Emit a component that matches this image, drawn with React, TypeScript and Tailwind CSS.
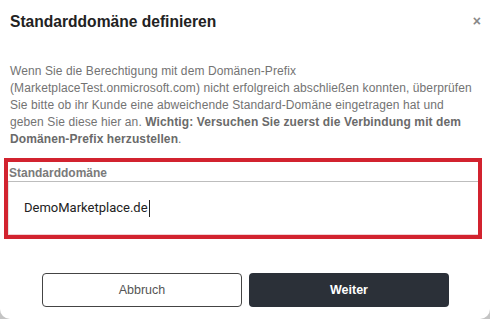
import React from 'react';

const App: React.FC = () => {
  return (
    <div className="w-[490px] h-[319px] bg-[#c4c4c4] overflow-hidden" style={{ fontFamily: '"Liberation Sans", Arial, sans-serif' }}>
      <div className="h-full bg-white rounded-b-[10px] flex flex-col">
        {/* Header */}
        <div className="flex items-start justify-between pl-[10px] pr-[9px] pt-[10px]">
          <h1 className="text-[15.6px] font-bold text-[#222] leading-[24px]">Standarddomäne definieren</h1>
          <span className="text-[#888] text-[14px] font-bold leading-[14px] mt-[4px]">×</span>
        </div>

        {/* Body */}
        <p className="mt-[29px] px-[10px] text-[12px] leading-[17px] text-[#737373] tracking-[0.1px]">
          Wenn Sie die Berechtigung mit dem Domänen-Prefix
          <br />
          (MarketplaceTest.onmicrosoft.com) nicht erfolgreich abschließen konnten, überprüfen
          <br />
          Sie bitte ob ihr Kunde eine abweichende Standard-Domäne eingetragen hat und
          <br />
          geben Sie diese hier an. <b className="text-[#6a6a6a]">Wichtig: Versuchen Sie zuerst die Verbindung mit dem</b>
          <br />
          <b className="text-[#6a6a6a]">Domänen-Prefix herzustellen</b>.
        </p>

        {/* Field */}
        <div className="mt-[10px] mx-[4px] w-[478px] border-[4.5px] border-[#d2232f] flex flex-col">
          <label className="px-[1px] pt-[4px] text-[12px] font-bold text-[#7a7a7a] leading-[15px] border-b border-[#bdbdbd]">
            Standarddomäne
          </label>
          <div className="h-[53px] flex items-center pl-[15px] border-l border-[#e4e4e4] border-b border-b-[#f3d0d3]">
            <span className="text-[13px] text-[#222]" style={{ fontFamily: 'Roboto, "Liberation Sans", sans-serif' }}>DemoMarketplace.de</span>
            <span className="w-px h-[17px] bg-[#222] ml-[1px]" />
          </div>
        </div>

        {/* Actions */}
        <div className="mt-[34px] flex gap-[7px] pl-[42px]">
          <button className="w-[200px] h-[34px] rounded-[4px] border border-[#444] bg-white text-[12.5px] text-[#555]">
            Abbruch
          </button>
          <button className="w-[200px] h-[34px] rounded-[4px] bg-[#2b3038] text-[12.5px] font-bold text-white">
            Weiter
          </button>
        </div>
      </div>
    </div>
  );
};

export default App;
